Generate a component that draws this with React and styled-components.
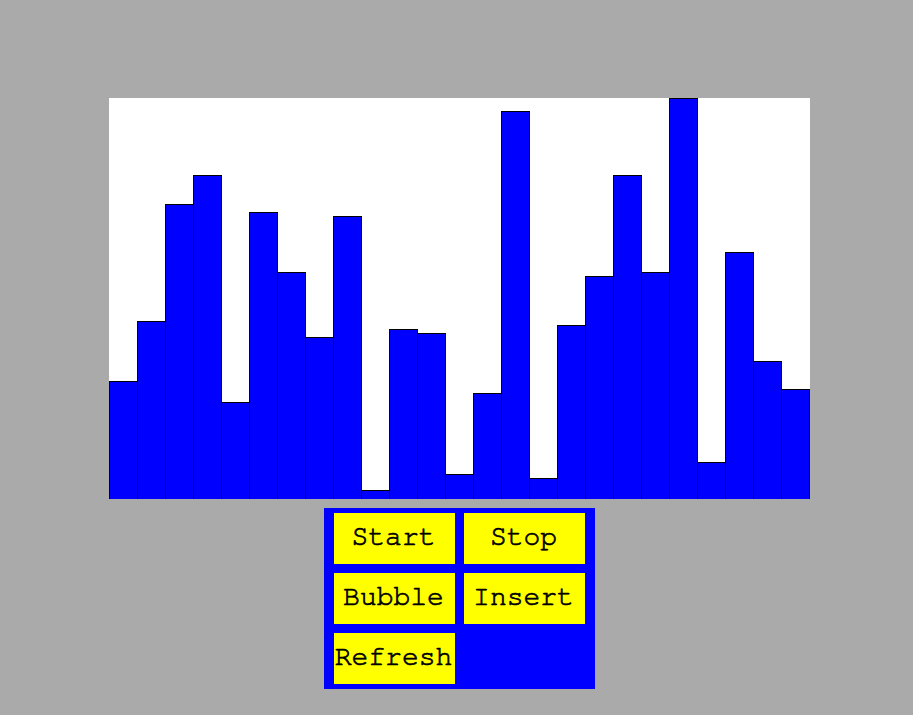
import React from "react";
import styled, { createGlobalStyle } from "styled-components";

const Global = createGlobalStyle`
  html, body { margin: 0; padding: 0; background: #aaaaaa; }
  body { min-height: 100vh; font-family: "Liberation Mono", monospace; }
`;

const Page = styled.div`
  display: flex;
  flex-direction: column;
  align-items: center;
  padding: 98px 0 0 6px;
  gap: 9px;
`;

const Chart = styled.div`
  width: 701px;
  height: 401px;
  background: #ffffff;
  display: flex;
  align-items: flex-end;
`;

const Bar = styled.div`
  box-sizing: border-box;
  width: 29px;
  margin-right: -1px;
  flex: none;
  background: #0000ff;
  border: 1px solid #000;
  border-bottom: none;
  &:last-child { margin-right: 0; }
`;

const Panel = styled.div`
  background: #0000ff;
  padding: 5px 10px;
  display: grid;
  grid-template-columns: 121px 121px;
  grid-auto-rows: 51px;
  column-gap: 9px;
  row-gap: 9px;
`;

const Button = styled.button`
  box-sizing: border-box;
  margin: 0;
  padding: 0 2px 2px 0;
  border: none;
  background: #ffff00;
  color: #000;
  font-family: "Nimbus Mono PS", "Nimbus Mono L", "FreeMono", "Courier New", Courier, "Liberation Mono", monospace;
  font-size: 28px;
  font-weight: normal;
  -webkit-text-stroke: 0.7px #000;
  line-height: 49px;
  white-space: nowrap;
  overflow: visible;
  display: flex;
  align-items: center;
  justify-content: center;
  cursor: pointer;
`;

const tops = [381, 321, 204, 175, 402, 212, 272, 337, 216, 490, 329, 333, 474, 393, 111, 478, 325, 276, 175, 272, 98, 462, 252, 361, 389];

export default function App() {
  return (
    <>
      <Global />
      <Page>
        <Chart>
          {tops.map((t, i) => (
            <Bar key={i} style={{ height: 499 - t }} />
          ))}
        </Chart>
        <Panel>
          <Button>Start</Button>
          <Button>Stop</Button>
          <Button>Bubble</Button>
          <Button>Insert</Button>
          <Button>Refresh</Button>
        </Panel>
      </Page>
    </>
  );
}
